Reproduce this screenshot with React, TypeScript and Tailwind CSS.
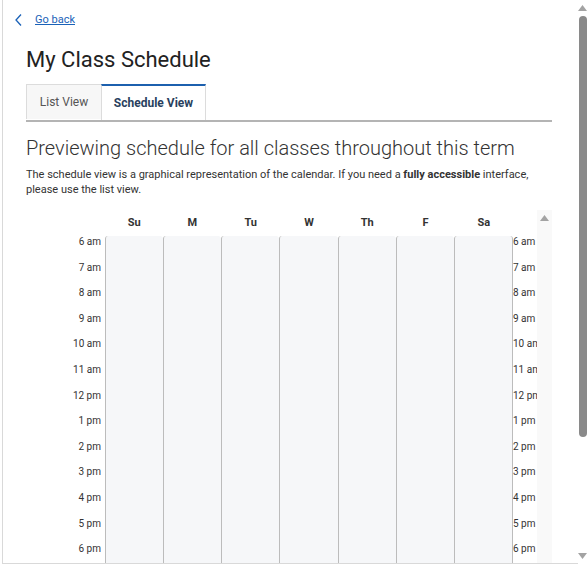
import React from "react";

const days = ["Su", "M", "Tu", "W", "Th", "F", "Sa"];
const hours = [
  "6 am", "7 am", "8 am", "9 am", "10 am", "11 am", "12 pm",
  "1 pm", "2 pm", "3 pm", "4 pm", "5 pm", "6 pm", "7 pm", "8 pm",
];

const font = { fontFamily: "Roboto, 'Liberation Sans', sans-serif" };

const ScrollArrow = ({ down, className }: { down?: boolean; className?: string }) => (
  <svg width="9" height="6" viewBox="0 0 9 6" className={className}>
    {down ? <path d="M0 0h9L4.5 6z" fill="currentColor" /> : <path d="M4.5 0L9 6H0z" fill="currentColor" />}
  </svg>
);

const App: React.FC = () => {
  return (
    <div className="flex h-[565px] w-[587px] overflow-hidden bg-white text-[#333]" style={font}>
      {/* page panel */}
      <div className="ml-[2px] flex h-[564px] flex-1 flex-col overflow-hidden border-b border-l border-[#d9d9d9]">
        <div className="flex items-center gap-[11px] pl-[11px] pt-[12px]">
          <svg width="10" height="14" viewBox="0 0 10 14" className="text-[#1a62b8]">
            <path d="M7 1.5L2 7l5 5.5" fill="none" stroke="currentColor" strokeWidth="1.3" />
          </svg>
          <a className="text-[11px] leading-[16px] text-[#1a62b8] underline">Go back</a>
        </div>

        <div className="flex flex-col pl-[23px] pr-[26px]">
          <h1 className="mt-[17px] text-[22px] leading-[30px] font-normal text-[#222]">My Class Schedule</h1>

          <div className="mt-[9px] flex border-b-2 border-[#b4b4b4]">
            <div className="flex h-[35px] w-[75px] items-center justify-center border-l border-t border-[#dcdcdc] bg-[#f7f7f7] text-[12px] text-[#555]">
              List View
            </div>
            <div className="flex h-[36px] w-[105px] items-center justify-center border-x border-t-2 border-x-[#dcdcdc] border-t-[#1c60ae] bg-white text-[12px] font-bold text-[#293f5e]">
              Schedule View
            </div>
          </div>

          <h2 className="mt-[13px] whitespace-nowrap text-[20px] leading-[26px] font-light text-[#333]">
            Previewing schedule for all classes throughout this term
          </h2>
          <p className="mt-[6px] text-[11px] leading-[15px] text-[#333]">
            The schedule view is a graphical representation of the calendar. If you need a{" "}
            <b>fully accessible</b> interface, please use the list view.
          </p>

          {/* schedule scroll region */}
          <div className="mt-[13px] flex">
            <div className="flex flex-1 flex-col">
              <div className="flex h-[26px] items-center">
                <div className="w-[79px]" />
                {days.map((d) => (
                  <div key={d} className="flex-1 text-center text-[11px] font-bold text-[#333]">
                    {d}
                  </div>
                ))}
                <div className="w-[24px]" />
              </div>
              <div className="flex">
                <div className="flex w-[79px] flex-col">
                  {hours.map((h) => (
                    <div key={h} className="h-[25.6px] pr-[4px] text-right text-[10px] leading-[12px] text-[#333]">
                      {h}
                    </div>
                  ))}
                </div>
                <div className="flex flex-1">
                  {days.map((d, i) => (
                    <div
                      key={d}
                      className={`flex-1 rounded-t-[3px] border-l border-[#bcbcbc] bg-[#f6f7f9] ${i === 6 ? "border-r" : ""}`}
                    />
                  ))}
                </div>
                <div className="flex w-[24px] flex-col overflow-hidden whitespace-nowrap">
                  {hours.map((h) => (
                    <div key={h} className="h-[25.6px] text-[10px] leading-[12px] text-[#333]">
                      {h}
                    </div>
                  ))}
                </div>
              </div>
            </div>
            {/* inner scrollbar */}
            <div className="flex w-[15px] flex-col items-center justify-between bg-[#f9f9f9] pb-[5px] pt-[5px] text-[#a3a3a3]">
              <ScrollArrow />
              <ScrollArrow down />
            </div>
          </div>
        </div>
      </div>

      {/* page scrollbar */}
      <div className="flex w-[9px] flex-col items-center text-[#a3a3a3]">
        <ScrollArrow className="mt-[5px]" />
        <div className="mt-[5px] h-[421px] w-[8px] rounded-full bg-[#8a8a8a]" />
        <div className="flex-1" />
        <ScrollArrow down className="mb-[6px]" />
      </div>
    </div>
  );
};

export default App;
